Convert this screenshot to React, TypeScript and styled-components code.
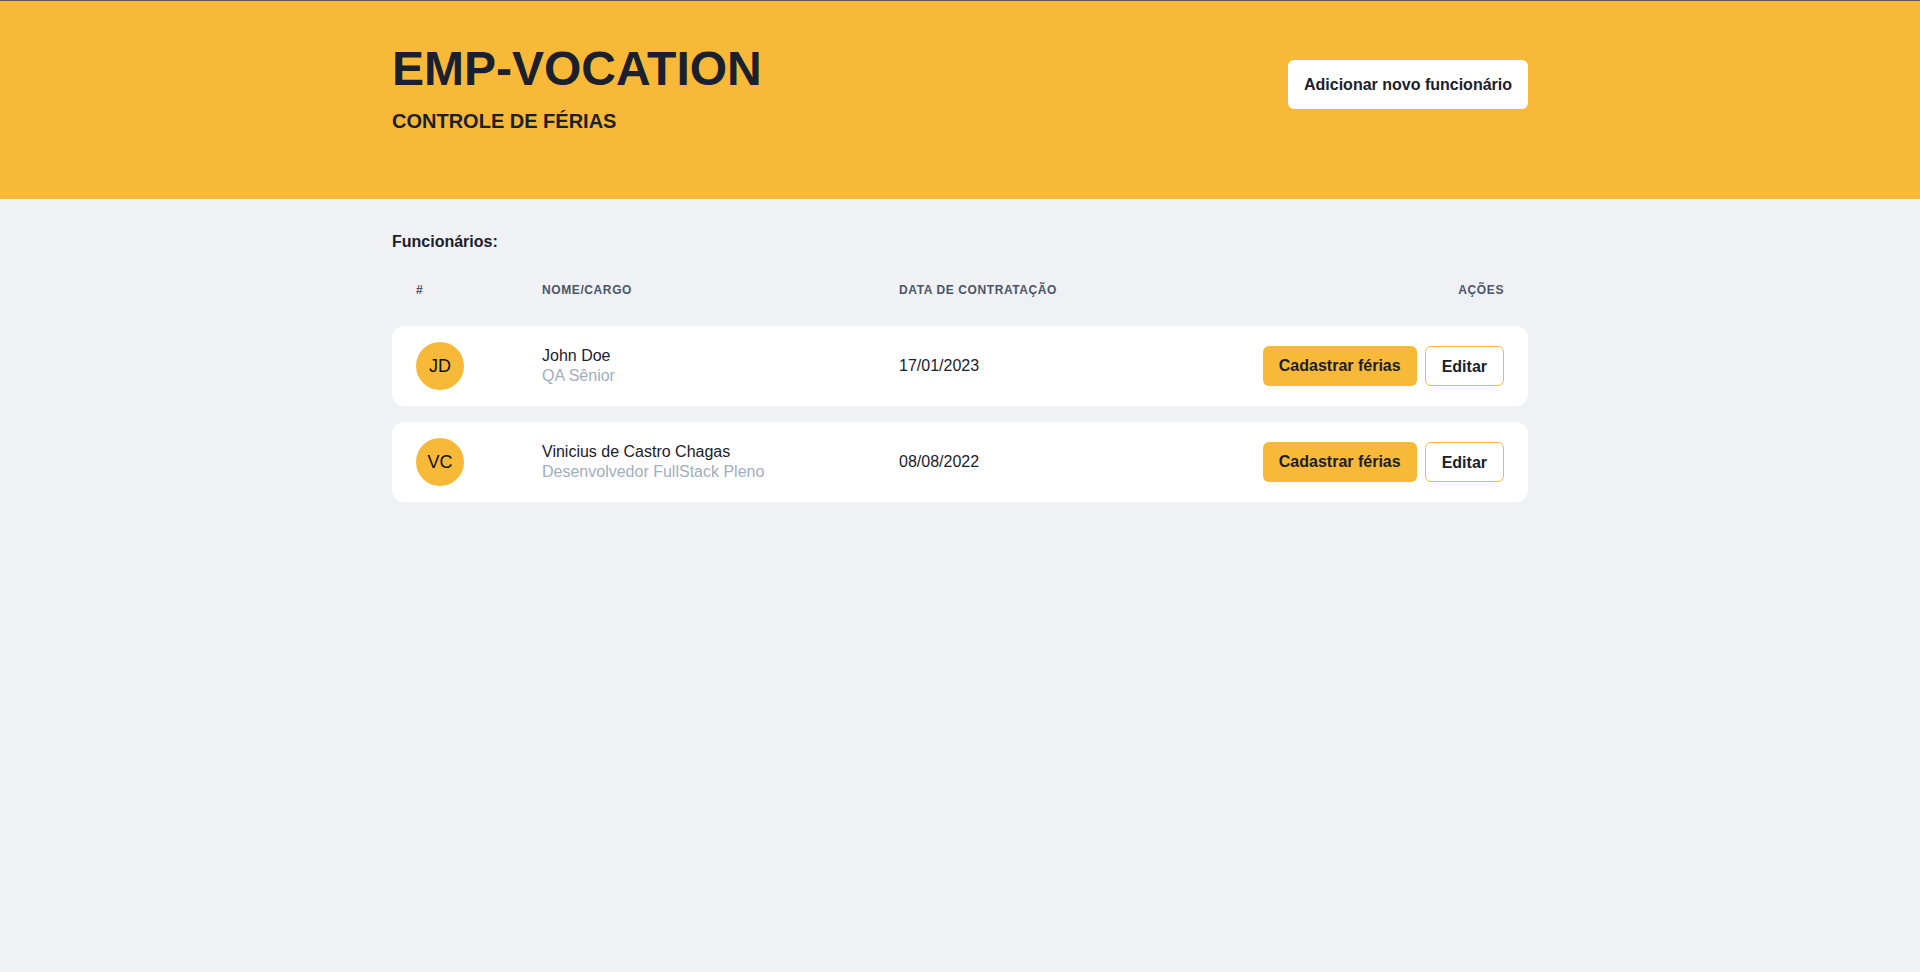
import React from "react";
import styled, { createGlobalStyle } from "styled-components";

const GlobalStyle = createGlobalStyle`
  * { box-sizing: border-box; }
  html, body { margin: 0; padding: 0; }
  body {
    background: #f0f1f5;
    font-family: "Liberation Sans", Arial, Helvetica, sans-serif;
    color: #1a202c;
    min-height: 100vh;
  }
`;

const Page = styled.div`
  min-height: 100vh;
  background: #f0f1f5;
`;

const Header = styled.header`
  background: #f9b938;
  border-top: 1px solid #5c5c5c;
  height: 199px;
`;

const Container = styled.div`
  width: 1136px;
  margin: 0 auto;
`;

const HeaderInner = styled(Container)`
  display: flex;
  justify-content: space-between;
  align-items: flex-start;
  padding-top: 44px;
`;

const Brand = styled.div`
  display: flex;
  flex-direction: column;
`;

const Title = styled.h1`
  margin: 0;
  font-size: 48px;
  line-height: 48px;
  font-weight: 700;
  color: #1a202c;
`;

const Subtitle = styled.h2`
  margin: 14px 0 0;
  font-size: 20px;
  line-height: 28px;
  font-weight: 700;
  color: #1a202c;
`;

const Button = styled.button<{ $variant?: "primary" | "outline" | "white"; $tall?: boolean }>`
  font-family: "Liberation Sans", Arial, sans-serif;
  font-size: 16px;
  line-height: 24px;
  font-weight: 700;
  color: #1a202c;
  border-radius: 6px;
  cursor: pointer;
  padding: ${(p) => (p.$tall ? "12px 16px" : "8px 16px")};
  border: ${(p) => (p.$variant === "outline" ? "1px solid #f9b938" : "none")};
  background: ${(p) => (p.$variant === "primary" ? "#f9b938" : "#ffffff")};
  height: ${(p) => (p.$tall ? "49px" : "40px")};
`;

const AddButton = styled(Button)`
  margin-top: 15px;
`;

const Main = styled(Container)`
  padding-top: 31px;
`;

const SectionTitle = styled.h3`
  margin: 0;
  font-size: 16px;
  line-height: 24px;
  font-weight: 700;
  color: #1a202c;
`;

const Table = styled.div`
  display: grid;
  grid-template-columns: 126px 357px 1fr auto;
  row-gap: 16px;
  padding-top: 16px;
`;

const HeadRow = styled.div`
  display: contents;
`;

const HeadCell = styled.div<{ $right?: boolean }>`
  padding: 12px 24px;
  font-size: 12px;
  line-height: 16px;
  font-weight: 700;
  letter-spacing: 0.05em;
  text-transform: uppercase;
  color: #4a5568;
  text-align: ${(p) => (p.$right ? "right" : "left")};
`;

const Row = styled.div`
  grid-column: 1 / -1;
  display: grid;
  grid-template-columns: subgrid;
  background: #ffffff;
  border-radius: 12px;
  height: 80px;
`;

const Cell = styled.div<{ $right?: boolean }>`
  padding: 16px 24px;
  display: flex;
  align-items: center;
  justify-content: ${(p) => (p.$right ? "flex-end" : "flex-start")};
  font-size: 16px;
  line-height: 20px;
  color: #1a202c;
`;

const Avatar = styled.div`
  width: 48px;
  height: 48px;
  border-radius: 50%;
  background: #f9b938;
  display: flex;
  align-items: center;
  justify-content: center;
  font-size: 18px;
  color: #111;
`;

const NameBlock = styled.div`
  display: flex;
  flex-direction: column;
`;

const Name = styled.span`
  font-size: 16px;
  line-height: 20px;
  color: #1a202c;
`;

const Role = styled.span`
  font-size: 16px;
  line-height: 20px;
  color: #a0aec0;
`;

const Actions = styled.div`
  display: flex;
  gap: 8px;
`;

const employees = [
  { initials: "JD", name: "John Doe", role: "QA Sênior", date: "17/01/2023" },
  {
    initials: "VC",
    name: "Vinicius de Castro Chagas",
    role: "Desenvolvedor FullStack Pleno",
    date: "08/08/2022",
  },
];

export default function App() {
  return (
    <Page>
      <GlobalStyle />
      <Header>
        <HeaderInner>
          <Brand>
            <Title>EMP-VOCATION</Title>
            <Subtitle>CONTROLE DE FÉRIAS</Subtitle>
          </Brand>
          <AddButton $variant="white" $tall>
            Adicionar novo funcionário
          </AddButton>
        </HeaderInner>
      </Header>
      <Main>
        <SectionTitle>Funcionários:</SectionTitle>
        <Table>
          <HeadRow>
            <HeadCell>#</HeadCell>
            <HeadCell>Nome/Cargo</HeadCell>
            <HeadCell>Data de contratação</HeadCell>
            <HeadCell $right>Ações</HeadCell>
          </HeadRow>
          {employees.map((e) => (
            <Row key={e.initials}>
              <Cell>
                <Avatar>{e.initials}</Avatar>
              </Cell>
              <Cell>
                <NameBlock>
                  <Name>{e.name}</Name>
                  <Role>{e.role}</Role>
                </NameBlock>
              </Cell>
              <Cell>{e.date}</Cell>
              <Cell $right>
                <Actions>
                  <Button $variant="primary">Cadastrar férias</Button>
                  <Button $variant="outline">Editar</Button>
                </Actions>
              </Cell>
            </Row>
          ))}
        </Table>
      </Main>
    </Page>
  );
}
